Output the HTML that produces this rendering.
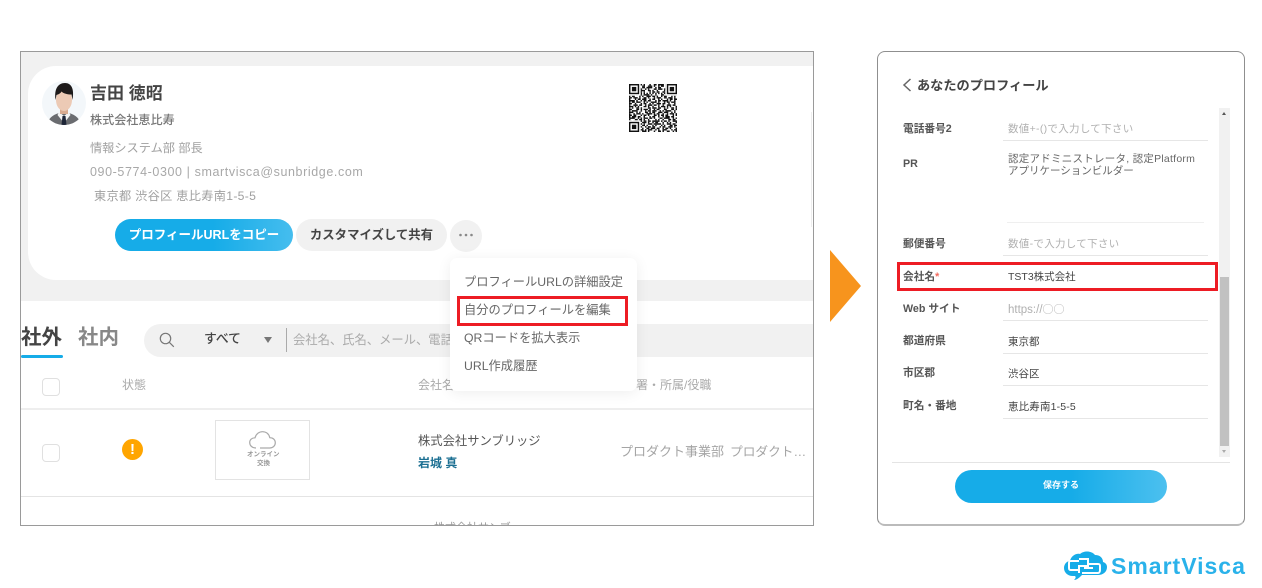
<!DOCTYPE html>
<html lang="ja">
<head>
<meta charset="utf-8">
<style>
html,body{margin:0;padding:0;background:#fff;}
body{width:1262px;height:588px;position:relative;overflow:hidden;font-family:"Liberation Sans","Noto Sans CJK JP",sans-serif;}
.a{position:absolute;}
.t{position:absolute;white-space:nowrap;line-height:20px;height:20px;}
.lb{font-size:10.7px;font-weight:700;color:#555;left:903px;}
.v{font-size:10.5px;color:#444;left:1008px;}
.ph{font-size:10.5px;letter-spacing:.3px;color:#b0b0b0;left:1008px;}
.u{position:absolute;left:1003px;width:205px;height:1px;background:#e6e6e6;}
.m{font-size:12.25px;color:#666;left:464px;}
</style>
</head>
<body>
<!-- left panel -->
<div class="a" style="left:20px;top:51px;width:792px;height:473px;border:1px solid #9a9a9a;overflow:hidden;background:#fff;">
  <div class="a" style="left:0;top:0;width:792px;height:249px;background:#f1f1f1;"></div>
  <div class="a" style="left:7px;top:14px;width:830px;height:214px;background:#fff;border-radius:28px;"></div>
  <div class="a" style="left:790px;top:60px;width:1px;height:115px;background:#eee;"></div>
  <div class="a" style="left:123px;top:272px;width:669px;height:33px;background:#f1f1f1;border-radius:17px 0 0 17px;"></div>
  <div class="a" style="left:0;top:303px;width:42px;height:3px;background:#16ace8;border-radius:2px;"></div>
  <div class="a" style="left:0;top:356px;width:792px;height:2px;background:#eee;"></div>
  <div class="a" style="left:0;top:444px;width:792px;height:1px;background:#e4e4e4;"></div>
  <div class="a" style="left:21px;top:326px;width:16px;height:16px;border:1px solid #e0e0e0;border-radius:4px;"></div>
  <div class="a" style="left:21px;top:392px;width:16px;height:16px;border:1px solid #e0e0e0;border-radius:4px;"></div>
  <div class="a" style="left:194px;top:368px;width:93px;height:58px;border:1px solid #e3e3e3;"></div>
  <div class="t" style="left:413px;top:466px;font-size:11px;color:#999;">株式会社サンブ</div>
</div>

<!-- avatar -->
<svg class="a" style="left:42px;top:81px;" width="44" height="44" viewBox="0 0 44 44">
  <defs><clipPath id="av"><circle cx="22" cy="22" r="22"/></clipPath></defs>
  <g clip-path="url(#av)">
    <rect width="44" height="44" fill="#f3f7fa"/>
    <path d="M5 44c1-6 5-10 12-12h10c7 2 11 6 12 12z" fill="#6a6c70"/>
    <path d="M17 31l5 4 5-4 1.500 3-6.500 8-6.500-8z" fill="#f4f4f4"/>
    <path d="M20.500 35h3l1 9h-5z" fill="#1d2436"/>
    <rect x="18" y="26" width="8" height="7" fill="#d9ab90"/>
    <ellipse cx="22" cy="19" rx="8" ry="11" fill="#eccab5"/>
    <path d="M13.500 19C12 8 16 2 23 2c6.500 0 9.500 6 7.500 17l-1-5.500c-4 0-8-1-10-3-1 2-3.500 3-5 3.500z" fill="#1d1a1a"/>
  </g>
</svg>

<div class="t" style="left:90px;top:84px;font-size:17px;font-weight:700;color:#444;">吉田 徳昭</div>
<div class="t" style="left:90px;top:110px;font-size:12.100px;font-weight:500;color:#777;">株式会社恵比寿</div>
<div class="t" style="left:90px;top:138px;font-size:12.200px;color:#a0a0a0;">情報システム部 部長</div>
<div class="t" style="left:90px;top:162px;font-size:12.500px;letter-spacing:.6px;color:#a8a8a8;">090-5774-0300 | smartvisca@sunbridge.com</div>
<div class="t" style="left:94px;top:186px;font-size:12.200px;letter-spacing:.3px;color:#a0a0a0;">東京都 渋谷区 恵比寿南1-5-5</div>

<!-- QR -->
<svg class="a" style="left:629px;top:84px;filter:blur(.35px);" width="48" height="48" viewBox="0 0 33 33" fill="none" stroke="#111" stroke-width="1">
  <path stroke-dasharray="1 2 3 1 2 1 1 3 1 2 2 1 4 1" d="M0 .5h33"/>
  <path stroke-dasharray="2 1 1 1 1 3 2 2 3 1 1 2 1 1" d="M0 1.500h33"/>
  <path stroke-dasharray="1 1 3 2 1 1 2 1 4 2 1 1 2 3" d="M0 2.500h33"/>
  <path stroke-dasharray="3 1 1 2 2 2 1 1 1 3 2 1 3 1" d="M0 3.500h33"/>
  <path stroke-dasharray="1 2 2 1 1 1 3 2 2 1 1 2 1 4" d="M0 4.500h33"/>
  <path stroke-dasharray="2 2 1 1 3 1 1 3 1 1 2 1 2 2" d="M0 5.500h33"/>
  <path stroke-dasharray="1 1 1 1 1 1 1 1 1 1 1 1 1 1 1 1 1 1 1 1" d="M0 6.500h33"/>
  <path stroke-dasharray="3 2 1 1 2 1 4 1 1 2 1 3 2 1" d="M0 7.500h33"/>
  <path stroke-dasharray="1 1 2 3 1 1 1 2 3 1 2 1 1 2" d="M0 8.500h33"/>
  <path stroke-dasharray="2 1 3 1 1 2 2 1 1 3 1 1 3 2" d="M0 9.500h33"/>
  <path stroke-dasharray="1 3 1 1 2 1 3 2 1 1 2 2 1 1" d="M0 10.500h33"/>
  <path stroke-dasharray="4 1 1 2 1 1 2 1 2 3 1 1 2 1" d="M0 11.500h33"/>
  <path stroke-dasharray="1 1 2 1 3 2 1 1 1 2 4 1 1 3" d="M0 12.500h33"/>
  <path stroke-dasharray="2 2 1 3 1 1 2 2 1 1 1 2 3 1" d="M0 13.500h33"/>
  <path stroke-dasharray="1 2 3 1 2 2 1 1 3 1 2 1 1 2" d="M0 14.500h33"/>
  <path stroke-dasharray="3 1 1 1 1 3 2 1 1 2 1 3 1 1" d="M0 15.500h33"/>
  <path stroke-dasharray="1 1 1 2 2 1 1 4 2 1 3 1 2 2" d="M0 16.500h33"/>
  <path stroke-dasharray="2 3 2 1 1 1 3 1 1 2 1 1 2 3" d="M0 17.500h33"/>
  <path stroke-dasharray="1 1 4 2 1 2 1 1 2 1 3 2 1 1" d="M0 18.500h33"/>
  <path stroke-dasharray="3 2 1 1 1 3 2 1 1 1 2 2 3 1" d="M0 19.500h33"/>
  <path stroke-dasharray="1 2 1 1 3 1 1 2 4 1 1 1 2 2" d="M0 20.500h33"/>
  <path stroke-dasharray="2 1 2 3 1 1 2 1 1 3 2 1 1 1" d="M0 21.500h33"/>
  <path stroke-dasharray="1 1 3 1 2 2 1 3 1 1 2 2 1 2" d="M0 22.500h33"/>
  <path stroke-dasharray="4 2 1 1 1 1 3 1 2 1 1 3 2 1" d="M0 23.500h33"/>
  <path stroke-dasharray="1 3 2 1 2 1 1 2 1 4 1 1 1 2" d="M0 24.500h33"/>
  <path stroke-dasharray="2 1 1 2 3 1 2 1 2 1 5 1 1 1" d="M0 25.500h33"/>
  <path stroke-dasharray="1 2 1 1 1 3 3 1 1 2 1 1 2 3" d="M0 26.500h33"/>
  <path stroke-dasharray="3 1 2 2 1 1 1 2 3 1 5 1 1 2" d="M0 27.500h33"/>
  <path stroke-dasharray="1 1 1 3 2 1 2 1 1 3 1 1 1 3" d="M0 28.500h33"/>
  <path stroke-dasharray="2 2 3 1 1 2 1 1 2 1 2 3 1 1" d="M0 29.500h33"/>
  <path stroke-dasharray="1 1 2 1 1 3 1 2 2 1 3 1 2 2" d="M0 30.500h33"/>
  <path stroke-dasharray="3 3 1 1 2 1 1 1 3 2 1 1 1 2" d="M0 31.500h33"/>
  <path stroke-dasharray="1 2 2 2 1 1 3 1 1 3 1 2 2 1" d="M0 32.500h33"/>
  <g fill="#fff" stroke="none"><rect width="8" height="8"/><rect x="25" width="8" height="8"/><rect y="25" width="8" height="8"/></g>
  <g><rect x=".5" y=".5" width="6" height="6"/><rect x="26.500" y=".5" width="6" height="6"/><rect x=".5" y="26.500" width="6" height="6"/></g>
  <g fill="#111" stroke="none"><rect x="2" y="2" width="3" height="3"/><rect x="28" y="2" width="3" height="3"/><rect x="2" y="28" width="3" height="3"/></g>
</svg>

<!-- buttons -->
<div class="a" style="left:115px;top:219px;width:178px;height:32px;border-radius:16px;background:linear-gradient(90deg,#16ace8 0%,#16ace8 55%,#45bdee 100%);color:#fff;font-size:12.500px;font-weight:700;text-align:center;line-height:32px;">プロフィールURLをコピー</div>
<div class="a" style="left:296px;top:219px;width:151px;height:32px;border-radius:16px;background:#f1f1f1;color:#444;font-size:12.400px;font-weight:700;text-align:center;line-height:32px;">カスタマイズして共有</div>
<div class="a" style="left:450px;top:220px;width:32px;height:32px;border-radius:16px;background:#f1f1f1;"></div>
<svg class="a" style="left:458px;top:232px;" width="16" height="6" viewBox="0 0 16 6" fill="#888"><circle cx="2.500" cy="3" r="1.300"/><circle cx="8" cy="3" r="1.300"/><circle cx="13.500" cy="3" r="1.300"/></svg>

<!-- tabs + search -->
<div class="t" style="left:21px;top:328px;font-size:20.500px;font-weight:700;color:#444;">社外</div>
<div class="t" style="left:78px;top:328px;font-size:20.500px;font-weight:700;color:#888;">社内</div>
<svg class="a" style="left:159px;top:332px;" width="16" height="16" viewBox="0 0 16 16" fill="none" stroke="#777" stroke-width="1.200"><circle cx="6.500" cy="6.500" r="5.200"/><path d="M10.300 10.300l4.500 4.500"/></svg>
<div class="t" style="left:204px;top:329px;font-size:12.800px;font-weight:500;color:#444;">すべて</div>
<div class="a" style="left:264px;top:337px;width:0;height:0;border-left:4px solid transparent;border-right:4px solid transparent;border-top:6px solid #777;"></div>
<div class="a" style="left:286px;top:328px;width:1px;height:24px;background:#aaa;"></div>
<div class="t" style="left:293px;top:330px;font-size:12.300px;color:#aaa;">会社名、氏名、メール、電話番号</div>

<!-- table -->
<div class="t" style="left:122px;top:375px;font-size:12px;color:#aaa;">状態</div>
<div class="t" style="left:418px;top:375px;font-size:12px;color:#aaa;">会社名・氏名</div>
<div class="t" style="left:624px;top:375px;font-size:12px;color:#aaa;">部署・所属/役職</div>
<div class="a" style="left:122px;top:439px;width:21px;height:21px;border-radius:50%;background:#ffa500;color:#fff;font-size:15px;font-weight:700;text-align:center;line-height:21px;">!</div>
<svg class="a" style="left:249px;top:431px;" width="27" height="18" viewBox="0 0 27 18" fill="none" stroke="#aaa" stroke-width="1.200"><path d="M7 17C3 17 .7 14.500 .7 11.500 .7 8.500 3 6.800 6 6.800 7 3 10 .7 13.500 .7c4 0 6.500 2.500 7.300 6 3.500 0 5.500 2.200 5.500 5 0 3-2.300 5.300-5.500 5.300H11"/></svg>
<div class="t" style="left:247px;top:445px;font-size:6.500px;font-weight:700;color:#999;">オンライン</div>
<div class="t" style="left:257px;top:454px;font-size:6.500px;font-weight:700;color:#999;">交換</div>
<div class="t" style="left:418px;top:431px;font-size:12.300px;color:#555;">株式会社サンブリッジ</div>
<div class="t" style="left:418px;top:453px;font-size:12px;font-weight:700;color:#1b6f92;">岩城 真</div>
<div class="t" style="left:620px;top:442px;font-size:13px;color:#a5a5a5;">プロダクト事業部<span style="margin-left:6px;font-size:12.700px;">プロダクト…</span></div>

<!-- menu -->
<div class="a" style="left:450px;top:258px;width:187px;height:133px;background:#fff;border-radius:7px;box-shadow:0 2px 14px rgba(0,0,0,.07);"></div>
<div class="t m" style="top:272px;">プロフィールURLの詳細設定</div>
<div class="t m" style="top:300px;">自分のプロフィールを編集</div>
<div class="t m" style="top:328px;">QRコードを拡大表示</div>
<div class="t m" style="top:356px;">URL作成履歴</div>
<div class="a" style="left:457px;top:296px;width:165px;height:24px;border:3px solid #ed1c24;"></div>

<!-- arrow -->
<svg class="a" style="left:830px;top:250px;" width="31" height="72" viewBox="0 0 31 72"><path d="M0 0L31 36 0 72z" fill="#f7941d"/></svg>

<!-- right panel -->
<div class="a" style="left:877px;top:51px;width:366px;height:472px;border:1px solid #8f8f8f;border-bottom:2px solid #bbb;border-radius:8px;background:#fff;"></div>
<svg class="a" style="left:902px;top:78px;" width="10" height="14" viewBox="0 0 10 14" fill="none" stroke="#666" stroke-width="1.500"><path d="M8.500 1L2 7l6.500 6"/></svg>
<div class="t" style="left:917px;top:76px;font-size:13.200px;font-weight:700;color:#444;">あなたのプロフィール</div>

<div class="a" style="left:1219px;top:108px;width:11px;height:349px;background:#f1f1f1;"></div>
<div class="a" style="left:1220px;top:277px;width:9px;height:169px;background:#c1c1c1;"></div>
<div class="a" style="left:1222px;top:112px;width:0;height:0;border-left:2.500px solid transparent;border-right:2.500px solid transparent;border-bottom:3px solid #555;"></div>
<div class="a" style="left:1222px;top:450px;width:0;height:0;border-left:2.500px solid transparent;border-right:2.500px solid transparent;border-top:3px solid #aaa;"></div>

<div class="t lb" style="top:119px;">電話番号2</div>
<div class="t ph" style="top:119px;">数値+-()で入力して下さい</div>
<div class="u" style="top:140px;"></div>
<div class="t lb" style="top:154px;">PR</div>
<div class="t v" style="top:149px;color:#666;letter-spacing:.25px;">認定アドミニストレータ, 認定Platform</div>
<div class="t v" style="top:161px;color:#666;">アプリケーションビルダー</div>
<div class="a" style="left:1007px;top:222px;width:197px;height:1px;background:#efefef;"></div>
<div class="t lb" style="top:234px;">郵便番号</div>
<div class="t ph" style="top:234px;">数値-で入力して下さい</div>
<div class="u" style="top:255px;"></div>
<div class="t lb" style="top:267px;">会社名<span style="color:#f26a5e;">*</span></div>
<div class="t v" style="top:267px;">TST3株式会社</div>
<div class="a" style="left:897px;top:262px;width:315px;height:23px;border:3px solid #ed1c24;"></div>
<div class="t lb" style="top:299px;">Web サイト</div>
<div class="t ph" style="top:299px;font-size:11.500px;letter-spacing:0;">https://<span style="font-family:'Noto Sans CJK JP',sans-serif;font-size:11px;">○○</span></div>
<div class="u" style="top:320px;"></div>
<div class="t lb" style="top:331px;">都道府県</div>
<div class="t v" style="top:332px;">東京都</div>
<div class="u" style="top:353px;"></div>
<div class="t lb" style="top:363px;">市区郡</div>
<div class="t v" style="top:364px;">渋谷区</div>
<div class="u" style="top:385px;"></div>
<div class="t lb" style="top:396px;">町名・番地</div>
<div class="t v" style="top:397px;letter-spacing:.15px;">恵比寿南1-5-5</div>
<div class="u" style="top:418px;"></div>
<div class="a" style="left:892px;top:462px;width:338px;height:1px;background:#e4e4e4;"></div>
<div class="a" style="left:955px;top:470px;width:212px;height:33px;border-radius:17px;background:linear-gradient(90deg,#16ace8 0%,#16ace8 55%,#4cc0ef 100%);color:#fff;font-size:9px;font-weight:700;text-align:center;line-height:31px;">保存する</div>

<!-- logo -->
<svg class="a" style="left:1064px;top:551px;" width="43" height="30" viewBox="0 0 43 30">
  <path d="M9 25C3 25 0 21 0 17c0-4 3-7 6-7 1-5 6-8 10-7 3-3 11-4 15 1 5 0 8 3 8 7 3 1 4 3 4 5 0 5-4 8-9 8H18c-2 2-5 5-8 5 2-2 2-3 1-4z" fill="#16ace8"/>
  <g fill="none" stroke="#fff" stroke-width="2">
    <path d="M15 10H7c-2 0-2 1-2 2v5c0 2 1 2 2 2h7"/>
    <path d="M15 8h9v7h-9v7"/>
    <path d="M25 13h9c2 0 2 1 2 2v4c0 2-1 3-2 3H18"/>
    <path d="M20 17h9"/>
  </g>
</svg>
<div class="t" style="left:1111px;top:556px;font-size:23px;font-weight:700;letter-spacing:1px;color:#2ab2ea;">SmartVisca</div>
</body>
</html>
